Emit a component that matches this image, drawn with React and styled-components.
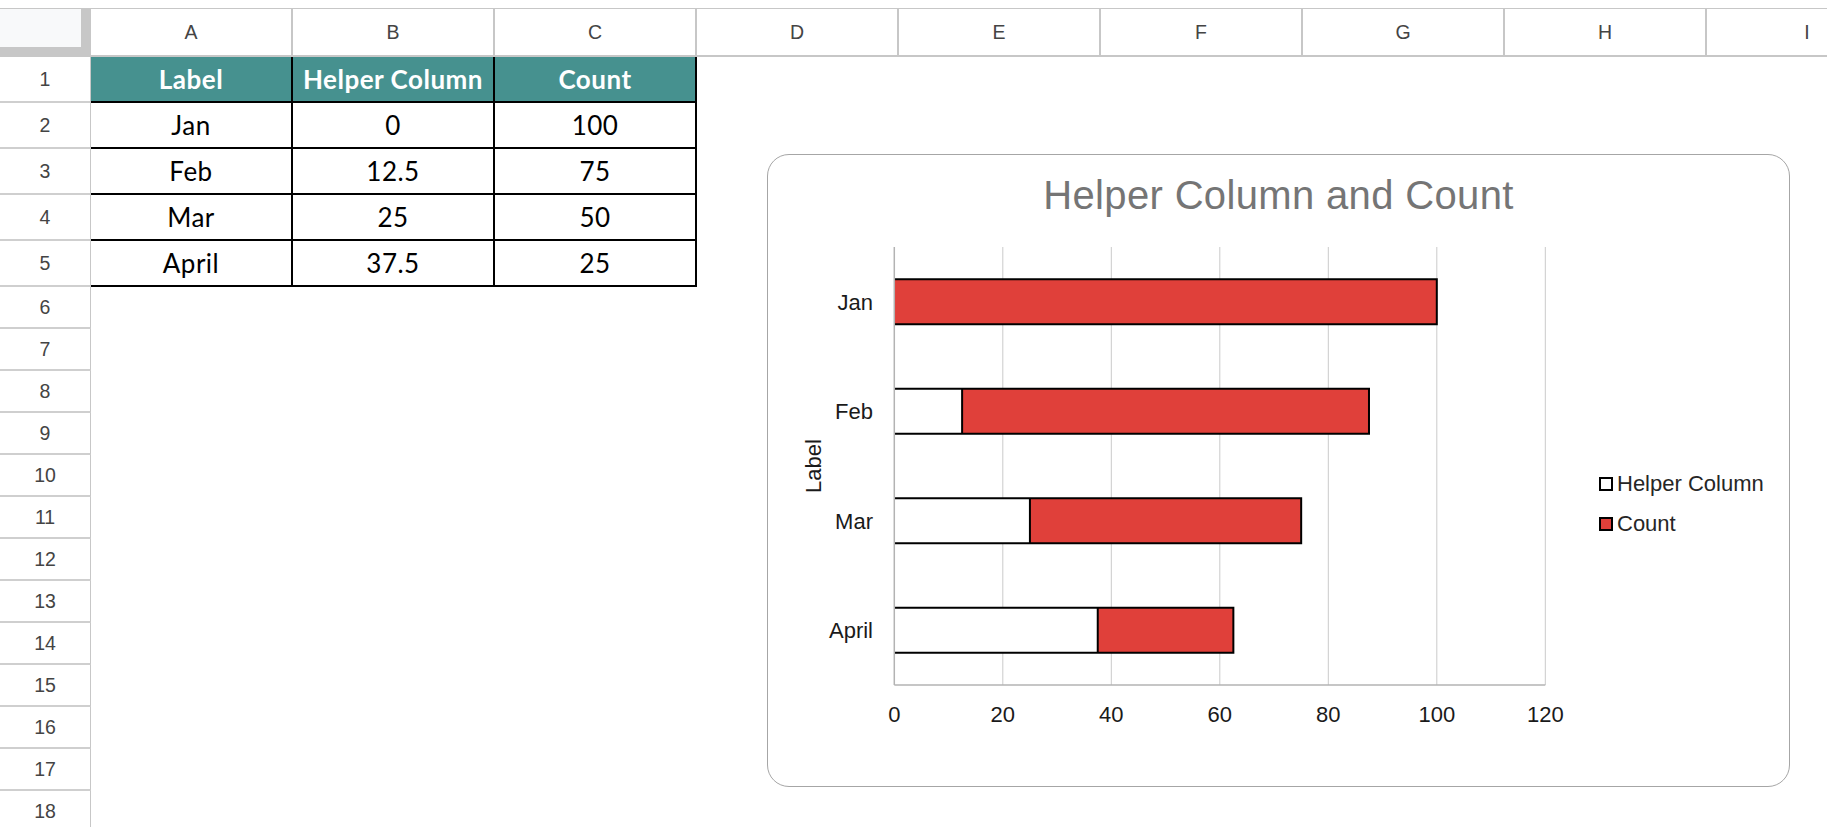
import React from 'react';
import styled, { createGlobalStyle, css } from 'styled-components';

const GlobalStyle = createGlobalStyle`
  html, body {
    margin: 0;
    padding: 0;
    background: #ffffff;
    overflow: hidden;
  }
  body {
    font-family: "Liberation Sans", Arial, sans-serif;
  }
`;

const COLUMNS = ['A', 'B', 'C', 'D', 'E', 'F', 'G', 'H', 'I'];
const TABLE = [
  ['Label', 'Helper Column', 'Count'],
  ['Jan', '0', '100'],
  ['Feb', '12.5', '75'],
  ['Mar', '25', '50'],
  ['April', '37.5', '25'],
];
const ROW_COUNT = 18;

const SERIES = [
  { label: 'Jan', helper: 0, count: 100 },
  { label: 'Feb', helper: 12.5, count: 75 },
  { label: 'Mar', helper: 25, count: 50 },
  { label: 'April', helper: 37.5, count: 25 },
];

/* plot geometry, in page coordinates (the svg viewBox uses the same space) */
const X0 = 894.3;
const PX_PER_UNIT = 5.425;
const PLOT_TOP = 247;
const PLOT_BOTTOM = 685;
const BAND = (PLOT_BOTTOM - PLOT_TOP) / SERIES.length;
const BAR_H = 45;
const TICKS = [0, 20, 40, 60, 80, 100, 120];
const xAt = (v) => X0 + v * PX_PER_UNIT;

const Page = styled.div`
  position: relative;
  width: 1827px;
  height: 827px;
  overflow: hidden;
  padding-top: 8px;
  box-sizing: border-box;
  background: #ffffff;
`;

const Grid = styled.div`
  display: flex;
  flex-direction: column;
  width: max-content;
`;

const HeaderRow = styled.div`
  display: flex;
  height: 49px;
  box-sizing: border-box;
  border-top: 1px solid #c7c7c7;
  border-bottom: 2px solid #c7c7c7;
`;

const Corner = styled.div`
  width: 91px;
  flex: none;
  background: #f8f9fa;
  box-shadow: inset -10px -8px 0 #c7c7c7;
`;

const ColHead = styled.div`
  width: 202px;
  flex: none;
  box-sizing: border-box;
  border-right: 2px solid #c7c7c7;
  display: flex;
  align-items: center;
  justify-content: center;
  font-family: "Liberation Sans", Arial, sans-serif;
  font-size: 19.5px;
  color: #444444;
`;

const Row = styled.div`
  display: flex;
  height: ${(p) => p.$h}px;
`;

const RowHead = styled.div`
  width: 91px;
  flex: none;
  box-sizing: border-box;
  border-right: 1.5px solid #c7c7c7;
  border-bottom: 2px solid #cfcfcf;
  display: flex;
  align-items: center;
  justify-content: center;
  font-family: "Liberation Sans", Arial, sans-serif;
  font-size: 19.5px;
  color: #444444;
`;

const Cell = styled.div`
  width: 202px;
  flex: none;
  box-sizing: border-box;
  display: flex;
  align-items: center;
  justify-content: center;
  font-family: Lato, "Open Sans", sans-serif;
  font-size: 26px;
  letter-spacing: 0.5px;
  color: #000000;
  ${(p) =>
    p.$boxed &&
    css`
      border-right: 2px solid #000000;
      border-bottom: 2px solid #000000;
    `}
  ${(p) =>
    p.$head &&
    css`
      background: #46918f;
      color: #ffffff;
      font-weight: 700;
    `}
`;

const ChartCard = styled.div`
  position: absolute;
  left: 767px;
  top: 154px;
  width: 1023px;
  height: 633px;
  box-sizing: border-box;
  border: 1px solid #a6a6a6;
  border-radius: 22px;
  background: #ffffff;
  display: flex;
  flex-direction: column;
`;

const ChartTitle = styled.div`
  padding-top: 20px;
  height: 40px;
  font-family: "Liberation Sans", Arial, sans-serif;
  font-size: 40px;
  line-height: 40px;
  letter-spacing: 0.35px;
  text-align: center;
  color: #757575;
`;

const ChartBody = styled.div`
  display: flex;
  margin-top: 15px;
`;

const PlotSvg = styled.svg`
  display: block;
  flex: none;
  font-family: "Liberation Sans", Arial, sans-serif;
`;

const Legend = styled.div`
  display: flex;
  flex-direction: column;
  margin-left: 9px;
  margin-top: 234px;
`;

const LegendItem = styled.div`
  display: flex;
  align-items: center;
  gap: 4px;
  height: 40px;
  font-family: "Liberation Sans", Arial, sans-serif;
  font-size: 22px;
  color: #262626;
  white-space: nowrap;
`;

const Swatch = styled.span`
  width: 14px;
  height: 14px;
  box-sizing: border-box;
  border: 2px solid #000000;
  background: ${(p) => p.$fill};
`;

const RED = '#e0403a';

function Sheet() {
  return (
    <Grid>
      <HeaderRow>
        <Corner />
        {COLUMNS.map((c) => (
          <ColHead key={c}>{c}</ColHead>
        ))}
      </HeaderRow>
      {Array.from({ length: ROW_COUNT }, (_, r) => {
        const data = TABLE[r];
        return (
          <Row key={r} $h={data ? 46 : 42}>
            <RowHead>{r + 1}</RowHead>
            {COLUMNS.map((c, ci) => {
              const value = data && ci < 3 ? data[ci] : null;
              return (
                <Cell key={c} $boxed={data && ci < 3} $head={r === 0 && ci < 3}>
                  {value}
                </Cell>
              );
            })}
          </Row>
        );
      })}
    </Grid>
  );
}

function BarPlot() {
  return (
    <PlotSvg width="822" height="530" viewBox="768 230 822 530">
      {TICKS.slice(1).map((t) => (
        <line
          key={t}
          x1={xAt(t)}
          x2={xAt(t)}
          y1={PLOT_TOP}
          y2={PLOT_BOTTOM}
          stroke="#cacaca"
          strokeWidth="1"
        />
      ))}
      {SERIES.map((s, i) => {
        const cy = PLOT_TOP + BAND * (i + 0.5);
        const y1 = cy - BAR_H / 2;
        const xs = xAt(s.helper);
        const xe = xAt(s.helper + s.count);
        return (
          <g key={s.label}>
            {s.helper > 0 && <rect x={X0} y={y1} width={xs - X0} height={BAR_H} fill="#ffffff" />}
            <rect x={xs} y={y1} width={xe - xs} height={BAR_H} fill={RED} />
            <path
              d={`M ${X0} ${y1} H ${xe} V ${y1 + BAR_H} H ${X0}`}
              fill="none"
              stroke="#000000"
              strokeWidth="2"
            />
            {s.helper > 0 && (
              <line x1={xs} x2={xs} y1={y1} y2={y1 + BAR_H} stroke="#000000" strokeWidth="2" />
            )}
            <text x="873" y={cy + 7.9} textAnchor="end" fontSize="22" fill="#1a1a1a">
              {s.label}
            </text>
          </g>
        );
      })}
      <line x1={X0} x2={X0} y1={PLOT_TOP} y2={PLOT_BOTTOM} stroke="#b3b3b3" strokeWidth="1.5" />
      <line x1={X0} x2={xAt(120)} y1={PLOT_BOTTOM} y2={PLOT_BOTTOM} stroke="#b3b3b3" strokeWidth="1.5" />
      {TICKS.map((t) => (
        <text key={t} x={xAt(t)} y="721.7" textAnchor="middle" fontSize="22" fill="#1a1a1a">
          {t}
        </text>
      ))}
      <text
        transform={`translate(821 ${(PLOT_TOP + PLOT_BOTTOM) / 2}) rotate(-90)`}
        textAnchor="middle"
        fontSize="22"
        fill="#1a1a1a"
      >
        Label
      </text>
    </PlotSvg>
  );
}

function Chart() {
  return (
    <ChartCard>
      <ChartTitle>Helper Column and Count</ChartTitle>
      <ChartBody>
        <BarPlot />
        <Legend>
          <LegendItem>
            <Swatch $fill="#ffffff" />
            Helper Column
          </LegendItem>
          <LegendItem>
            <Swatch $fill={RED} />
            Count
          </LegendItem>
        </Legend>
      </ChartBody>
    </ChartCard>
  );
}

export default function App() {
  return (
    <>
      <GlobalStyle />
      <Page>
        <Sheet />
        <Chart />
      </Page>
    </>
  );
}
